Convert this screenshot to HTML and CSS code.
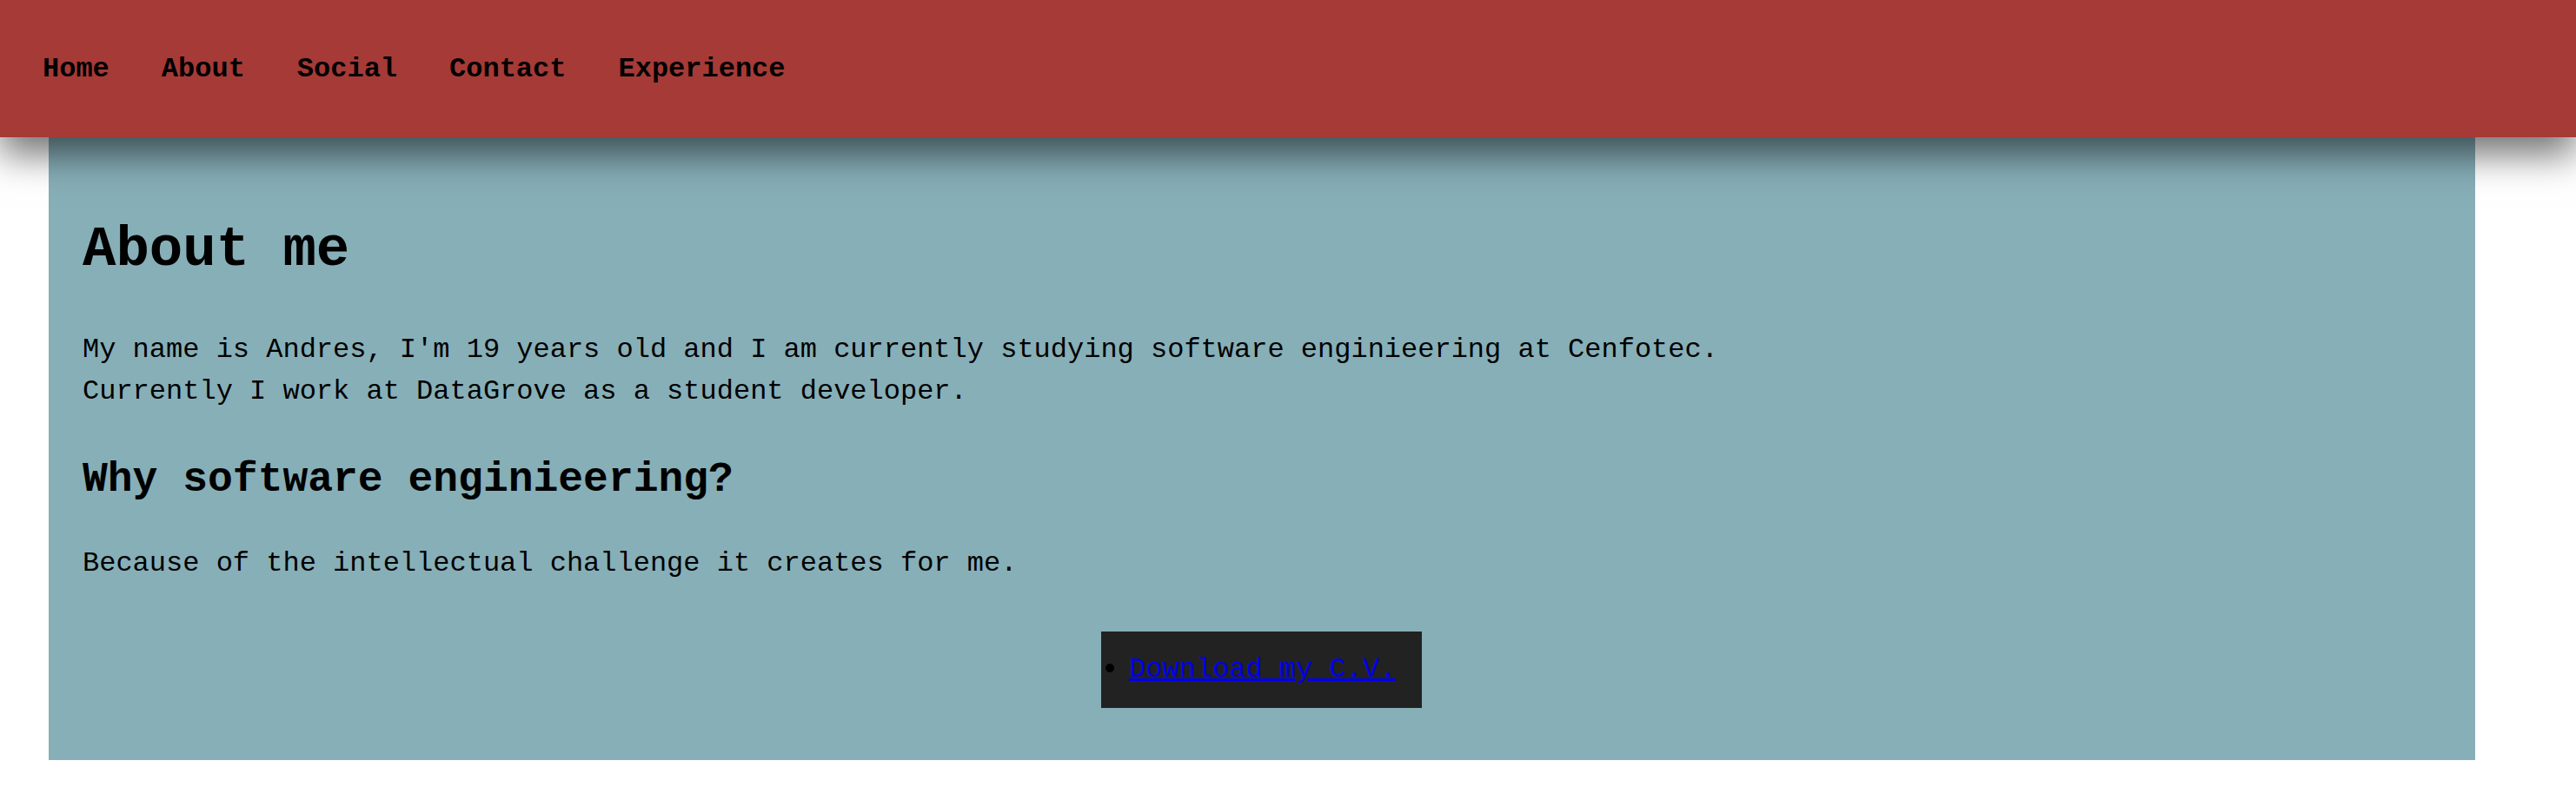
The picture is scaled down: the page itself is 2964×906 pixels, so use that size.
FILE: index.html
```html
<!DOCTYPE html>
<html lang="en">
<head>
<meta charset="utf-8">
<title>About me</title>
<link rel="stylesheet" href="styles.css">
</head>
<body>
<header class="topbar">
  <nav class="nav">
    <a class="nav-link" href="#home">Home</a>
    <a class="nav-link" href="#about">About</a>
    <a class="nav-link" href="#social">Social</a>
    <a class="nav-link" href="#contact">Contact</a>
    <a class="nav-link" href="#experience">Experience</a>
  </nav>
</header>
<main class="about">
  <h1 class="title">About me</h1>
  <p class="text">My name is Andres, I'm 19 years old and I am currently studying software enginieering at Cenfotec.<br>Currently I work at DataGrove as a student developer.</p>
  <h2 class="subtitle">Why software enginieering?</h2>
  <p class="text">Because of the intellectual challenge it creates for me.</p>
  <div class="cv-wrap">
    <ul class="cv">
      <li class="cv-item"><span class="cv-dot"></span><a class="cv-link" href="#cv">Download my C.V.</a></li>
    </ul>
  </div>
</main>
</body>
</html>
```

FILE: styles.css
```css
html, body {
  margin: 0;
  padding: 0;
  background: #ffffff;
}

body {
  font-family: "Liberation Mono", "Courier New", monospace;
  font-size: 32px;
  line-height: 1.5;
  color: #000;
}

.topbar {
  position: relative;
  z-index: 2;
  height: 158px;
  background: #a63a36;
  box-shadow: 0 20px 40px rgba(0, 0, 0, 0.55);
  display: flex;
  align-items: center;
}

.nav {
  display: flex;
  gap: 60px;
  padding-left: 49px;
  line-height: normal;
}

.nav-link {
  color: #000;
  font-weight: bold;
  font-size: 32px;
  text-decoration: none;
}

.about {
  position: relative;
  z-index: 1;
  margin-left: 56px;
  width: 2792px;
  box-sizing: border-box;
  background: #87afb8;
  padding: 40px 40px 40px 39px;
}

.title {
  font-size: 64px;
  margin: 42px 0 43px;
}

.text {
  margin: 0 0 32px;
}

.subtitle {
  font-size: 48px;
  margin: 41px 0 37px;
}

.cv-wrap {
  display: flex;
  justify-content: center;
  margin-top: 54px;
  margin-bottom: 20px;
}

.cv {
  list-style: none;
  margin: 0;
  background: #222222;
  padding: 20px 30px 20px 5px;
}

.cv-item {
  display: flex;
  align-items: center;
  gap: 17px;
}

.cv-dot {
  width: 10px;
  height: 10px;
  border-radius: 50%;
  background: #000;
  margin-top: -4px;
}

.cv-link {
  color: #0000ee;
  text-decoration: underline;
}
```
